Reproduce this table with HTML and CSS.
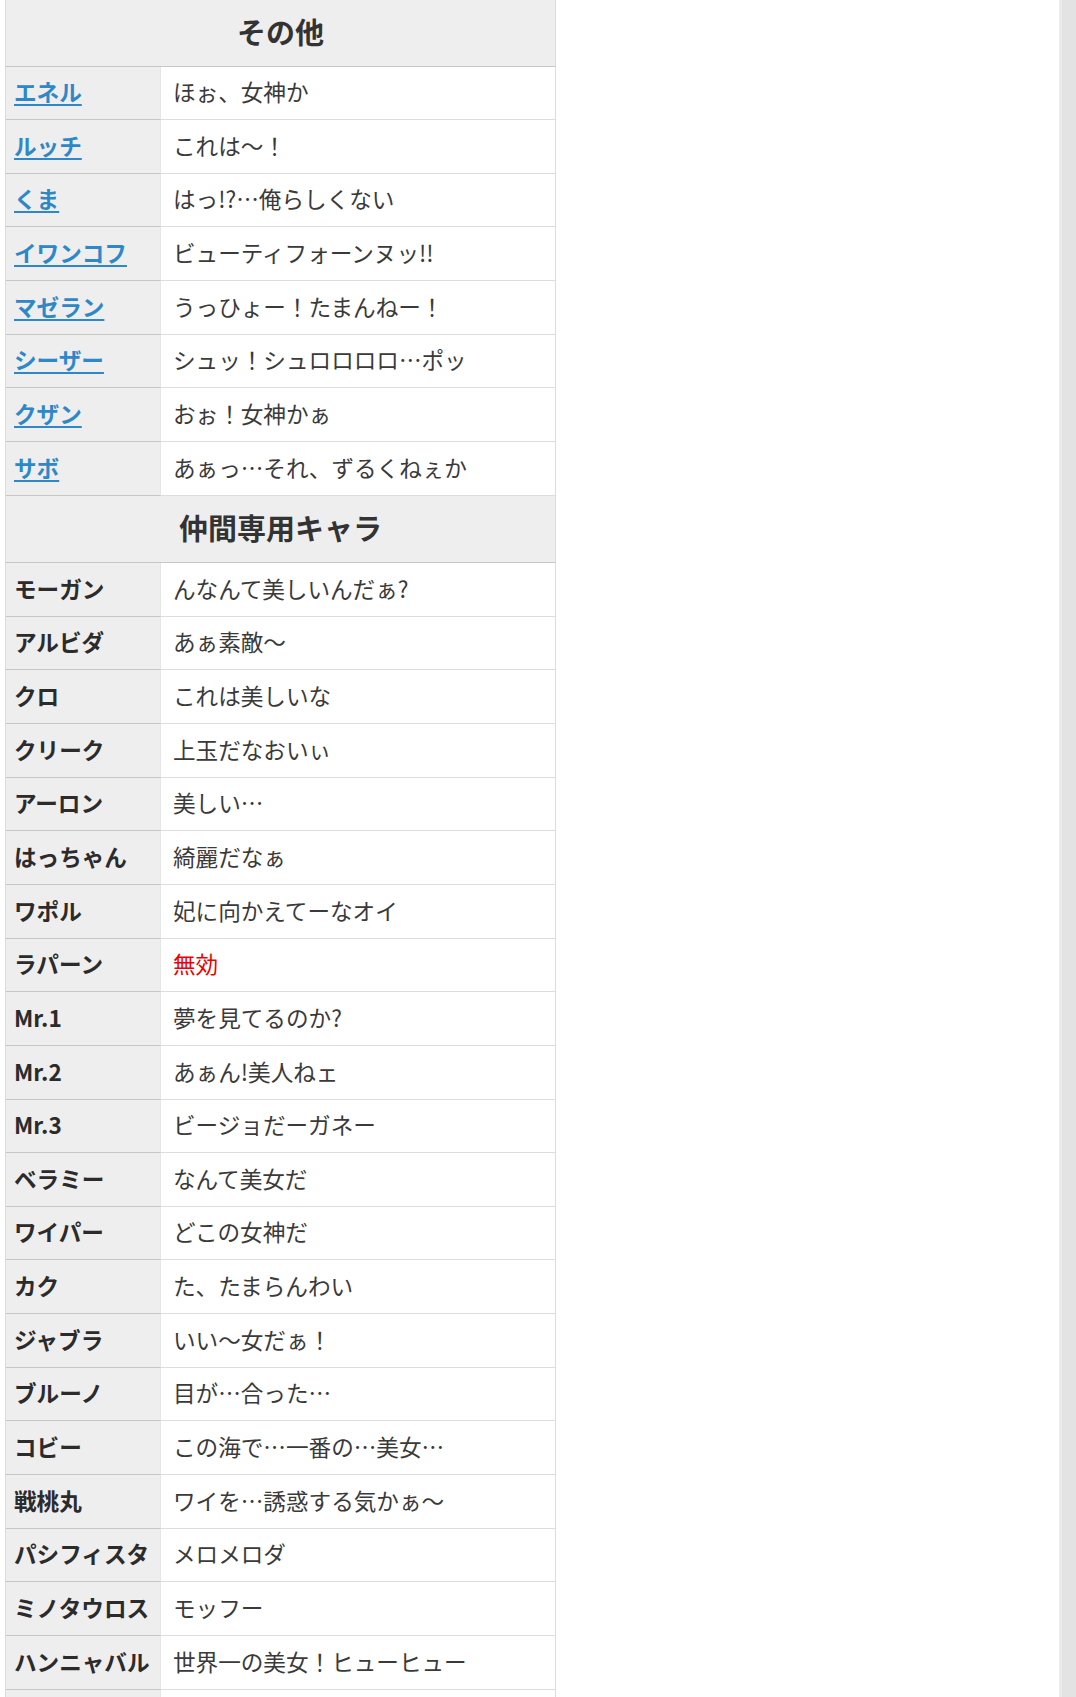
FILE: index.html
```html
<!DOCTYPE html>
<html lang="ja">
<head>
<meta charset="utf-8">
<title>メロメロ甘風 反応一覧</title>
<link rel="stylesheet" href="styles.css">
</head>
<body>
<div class="page">
  <main class="content">
    <table class="reactions">
      <colgroup>
        <col class="col-name">
        <col class="col-line">
      </colgroup>
      <tbody>
        <tr class="section"><th colspan="2">その他</th></tr>
        <tr><td class="name"><a href="#">エネル</a></td><td class="line">ほぉ、女神か</td></tr>
        <tr><td class="name"><a href="#">ルッチ</a></td><td class="line">これは〜！</td></tr>
        <tr><td class="name"><a href="#">くま</a></td><td class="line">はっ!?…俺らしくない</td></tr>
        <tr><td class="name"><a href="#">イワンコフ</a></td><td class="line">ビューティフォーンヌッ!!</td></tr>
        <tr><td class="name"><a href="#">マゼラン</a></td><td class="line">うっひょー！たまんねー！</td></tr>
        <tr><td class="name"><a href="#">シーザー</a></td><td class="line">シュッ！シュロロロロ…ポッ</td></tr>
        <tr><td class="name"><a href="#">クザン</a></td><td class="line">おぉ！女神かぁ</td></tr>
        <tr><td class="name"><a href="#">サボ</a></td><td class="line">あぁっ…それ、ずるくねぇか</td></tr>
        <tr class="section"><th colspan="2">仲間専用キャラ</th></tr>
        <tr><td class="name">モーガン</td><td class="line">んなんて美しいんだぁ?</td></tr>
        <tr><td class="name">アルビダ</td><td class="line">あぁ素敵〜</td></tr>
        <tr><td class="name">クロ</td><td class="line">これは美しいな</td></tr>
        <tr><td class="name">クリーク</td><td class="line">上玉だなおいぃ</td></tr>
        <tr><td class="name">アーロン</td><td class="line">美しい…</td></tr>
        <tr><td class="name">はっちゃん</td><td class="line">綺麗だなぁ</td></tr>
        <tr><td class="name">ワポル</td><td class="line">妃に向かえてーなオイ</td></tr>
        <tr><td class="name">ラパーン</td><td class="line"><span class="invalid">無効</span></td></tr>
        <tr><td class="name">Mr.1</td><td class="line">夢を見てるのか?</td></tr>
        <tr><td class="name">Mr.2</td><td class="line">あぁん!美人ねェ</td></tr>
        <tr><td class="name">Mr.3</td><td class="line">ビージョだーガネー</td></tr>
        <tr><td class="name">ベラミー</td><td class="line">なんて美女だ</td></tr>
        <tr><td class="name">ワイパー</td><td class="line">どこの女神だ</td></tr>
        <tr><td class="name">カク</td><td class="line">た、たまらんわい</td></tr>
        <tr><td class="name">ジャブラ</td><td class="line">いい〜女だぁ！</td></tr>
        <tr><td class="name">ブルーノ</td><td class="line">目が…合った…</td></tr>
        <tr><td class="name">コビー</td><td class="line">この海で…一番の…美女…</td></tr>
        <tr><td class="name">戦桃丸</td><td class="line">ワイを…誘惑する気かぁ〜</td></tr>
        <tr><td class="name">パシフィスタ</td><td class="line">メロメロダ</td></tr>
        <tr><td class="name">ミノタウロス</td><td class="line">モッフー</td></tr>
        <tr><td class="name">ハンニャバル</td><td class="line">世界一の美女！ヒューヒュー</td></tr>
        <tr><td class="name"></td><td class="line"></td></tr>
      </tbody>
    </table>
  </main>
  <aside class="sidebar"></aside>
</div>
</body>
</html>
```
FILE: styles.css
```css
html, body {
  margin: 0;
  padding: 0;
  background: #fff;
}

body {
  font-family: "Noto Sans CJK JP", "Noto Sans", sans-serif;
  color: #333;
  overflow: hidden;
}

.page {
  display: flex;
  height: 1697px;
  overflow: hidden;
}

.content {
  flex: 1;
  padding-left: 5px;
}

.sidebar {
  width: 14px;
  flex: none;
  background: #e3e3e3;
  border-left: 3px solid #ebebeb;
}

.reactions {
  width: 551px;
  margin-top: -1px;
  border-collapse: separate;
  border-spacing: 0;
  border-left: 1px solid #dcdcdc;
  table-layout: fixed;
}

.col-name {
  width: 155px;
}

.col-line {
  width: 395px;
}

.reactions th {
  height: 67.5px;
  padding: 0 0 3px;
  background: #eeeeee;
  border-bottom: 1px solid #c6c6c6;
  border-right: 1px solid #dcdcdc;
  font-size: 29px;
  font-weight: 700;
  color: #333;
  text-align: center;
  vertical-align: middle;
  box-sizing: border-box;
}

.reactions td {
  height: 53.65px;
  padding: 0 0 2px;
  box-sizing: border-box;
  vertical-align: middle;
  font-size: 22.6px;
  line-height: 1.3;
  white-space: nowrap;
}

.reactions td.name {
  padding-left: 8px;
  background: #eeeeee;
  border-bottom: 1px solid #c6c6c6;
  border-right: 1px solid #e6e6e6;
  font-weight: 700;
  color: #2b2b2b;
}

.reactions td.line {
  padding-left: 12px;
  background: #fff;
  border-bottom: 1px solid #dddddd;
  border-right: 1px solid #dcdcdc;
  color: #3a3a3a;
}

.reactions td.name a {
  color: #2e88c8;
  text-decoration: underline;
  text-underline-offset: 3px;
  text-decoration-thickness: 2px;
}

.invalid {
  color: #ee0000;
}
```
